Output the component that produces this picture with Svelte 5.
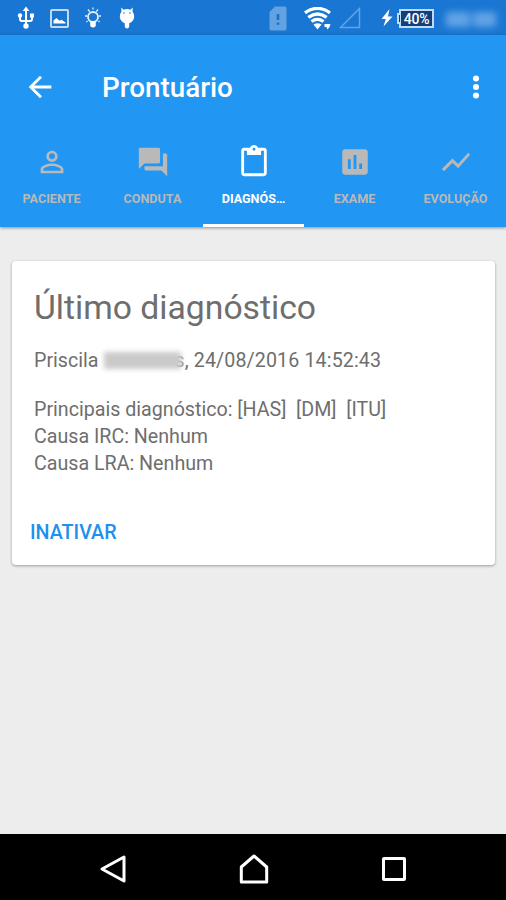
<script>
  const tabs = [
    { label: 'PACIENTE', d: 'M12 5.9c1.16 0 2.1.94 2.1 2.1s-.94 2.1-2.1 2.1S9.900 9.160 9.900 8s.94-2.100 2.100-2.100m0 9c2.970 0 6.100 1.460 6.100 2.100v1.100H5.900V17c0-.64 3.130-2.100 6.100-2.100M12 4C9.790 4 8 5.790 8 8s1.790 4 4 4 4-1.790 4-4-1.790-4-4-4zm0 9c-2.670 0-8 1.340-8 4v3h16v-3c0-2.660-5.330-4-8-4z' },
    { label: 'CONDUTA', d: 'M21 6h-2v9H6v2c0 .55.45 1 1 1h11l4 4V7c0-.55-.45-1-1-1zm-4 6V3c0-.55-.45-1-1-1H3c-.55 0-1 .45-1 1v14l4-4h10c.55 0 1-.45 1-1z' },
    { label: 'DIAGNÓS…', active: true, d: 'M19 2h-4.180C14.400.84 13.300 0 12 0S9.600.84 9.180 2H5c-1.100 0-2 .9-2 2v16c0 1.100.9 2 2 2h14c1.100 0 2-.9 2-2V4c0-1.100-.9-2-2-2zm-7 0c.55 0 1 .45 1 1s-.45 1-1 1-1-.45-1-1 .45-1 1-1zm7 18H5V4h2v3h10V4h2v16z' },
    { label: 'EXAME', d: 'M19 3H5c-1.100 0-2 .9-2 2v14c0 1.100.9 2 2 2h14c1.100 0 2-.9 2-2V5c0-1.100-.9-2-2-2zM9 17H7v-7h2v7zm4 0h-2V7h2v10zm4 0h-2v-4h2v4z' },
    { label: 'EVOLUÇÃO', d: 'M3.500 18.490l6-6.010 4 4L22 6.920l-1.410-1.410-7.090 7.970-4-4L2 16.990z' }
  ];
</script>

<div class="screen">
  <div class="status">
    <svg class="usb" width="18" height="24" viewBox="0 0 18 24" fill="none" stroke="#fff" stroke-width="2">
      <path d="M9 4v15M3 10v3q0 2 2 2h8q2 0 2-2v-3" />
      <path d="M9 .5l3.300 4.500H5.700z" fill="#fff" stroke="none" />
      <circle cx="9" cy="20" r="2.700" fill="#fff" stroke="none" />
      <circle cx="3" cy="9.500" r="2.200" fill="#fff" stroke="none" />
      <path d="M13 7.500h4v4h-4z" fill="#fff" stroke="none" />
    </svg>
    <svg class="photo" width="19" height="19" viewBox="0 0 19 19">
      <rect x="1" y="1" width="17" height="17" rx=".8" fill="none" stroke="#c3daf4" stroke-width="2" />
      <path d="M3.500 14.500v-3l3-2.500 3 2.700 2-1 4 2.800v1z" fill="#fff" />
    </svg>
    <svg class="bulb" width="16" height="22" viewBox="0 0 16 22" fill="none" stroke="#e6f1fc" stroke-width="1.800">
      <circle cx="8" cy="10" r="5" />
      <path d="M5.200 14v5q2.800 3 5.600 0v-5z" fill="#fff" stroke="none" />
      <path d="M3 2.500l1.700 2.200M13 2.500l-1.700 2.200M0 9h2M14 9h2M8 .5v2M2.500 14l-1 1M13.500 14l1 1" stroke-width="1.300" />
    </svg>
    <svg class="android" width="16" height="23" viewBox="0 0 16 23">
      <path d="M2.200.5l2.500 2.300Q8 1.300 11.300 2.800L13.800.5l-.3 4q2 2.500 1.700 5.500-.5 4.500-5 6.200v3.300q-.3 2-2.200 2t-2.200-2v-3.300Q1.300 14.500.8 10 .5 7 2.500 4.500z" fill="#fff" />
      <circle cx="5" cy="6" r=".8" fill="#1976d2" /><circle cx="11" cy="6" r=".8" fill="#1976d2" />
    </svg>
    <svg class="sim" width="18" height="25" viewBox="0 0 18 25">
      <path d="M6 .5h9.500q2 0 2 2v20q0 2-2 2h-13q-2 0-2-2V6z" fill="#62a2e2" />
      <path d="M9 8v6M9 16.500v2.300" stroke="#1c70c4" stroke-width="2.600" />
    </svg>
    <svg class="wifi" width="27" height="23" viewBox="0 0 27 23" fill="none" stroke="#fff">
      <path d="M1 5.800Q13.500-3 26 5.800M4.300 10.300q9.200-6.500 18.400 0M7.500 14.500q6-4.300 12 0" stroke-width="3.300" />
      <path d="M9.500 17.500q4-2.300 8 0l-4 5z" fill="#fff" stroke="none" />
      <path d="M20.500 17h6l-1 3-2 2.500-1-2.500h-2z" fill="#fff" stroke="none" />
    </svg>
    <svg class="signal" width="22" height="22" viewBox="0 0 22 22"><path d="M20.500 1.500v19H1.500z" fill="none" stroke="#62a5e5" stroke-width="1.500" /></svg>
    <svg class="bolt" width="12" height="18" viewBox="0 0 12 18"><path d="M8.500 0L.5 10h4.200L2.500 17.500 11.500 7.500H7z" fill="#fff" /></svg>
    <div class="battery"><span>40%</span></div>
    <div class="clock"><i></i><i></i></div>
  </div>

  <header>
    <div class="toolbar">
      <svg class="back" width="34" height="34" viewBox="0 0 24 24"><path d="M20 11H7.830l5.590-5.590L12 4l-8 8 8 8 1.410-1.410L7.830 13H20v-2z" fill="#fff" /></svg>
      <h1>Prontuário</h1>
      <svg class="more" width="34" height="34" viewBox="0 0 24 24" fill="#fff"><circle cx="12" cy="6" r="2.150" /><circle cx="12" cy="12" r="2.150" /><circle cx="12" cy="18" r="2.150" /></svg>
    </div>
    <nav>
      {#each tabs as tab}
        <div class="tab" class:active={tab.active}>
          <svg width="34" height="34" viewBox="0 0 24 24"><path d={tab.d} fill="currentColor" /></svg>
          <span>{tab.label}</span>
        </div>
      {/each}
    </nav>
  </header>

  <main>
    <section class="card">
      <h2>Último diagnóstico</h2>
      <div class="author"><span class="first">Priscila</span><span class="redacted"></span><span class="date"><span class="cut">s</span>, 24/08/2016 14:52:43</span></div>
      <div class="details">
        <div>Principais diagnóstico: [HAS]&nbsp; [DM]&nbsp; [ITU]</div>
        <div>Causa IRC: Nenhum</div>
        <div>Causa LRA: Nenhum</div>
      </div>
      <div class="action">INATIVAR</div>
    </section>
  </main>

  <footer>
    <svg width="28" height="30" viewBox="0 0 28 30"><path d="M25 3v24L3 15z" /></svg>
    <svg width="32" height="32" viewBox="0 0 32 32"><path d="M3.300 29V14L16 3l12.700 11v15z" /></svg>
    <svg width="28" height="28" viewBox="0 0 28 28"><rect x="3.500" y="3.500" width="21" height="21" rx=".5" /></svg>
  </footer>
</div>

<style>
  .screen {
    width: 506px;
    height: 900px;
    display: flex;
    flex-direction: column;
    overflow: hidden;
    background: #ededed;
    font-family: Roboto, 'Liberation Sans', sans-serif;
  }
  svg { display: block; flex: none; }
  .status {
    flex: none;
    height: 35px;
    display: flex;
    align-items: center;
    background: #1976d2;
    box-sizing: border-box;
    padding: 1px 0 0 17px;
  }
  .photo { margin-left: 15px; }
  .bulb { margin-left: 16px; }
  .android { margin-left: 18px; }
  .sim { margin-left: 134px; }
  .wifi { margin-left: 17px; }
  .signal { margin-left: 8px; }
  .bolt { margin-left: 20px; }
  .battery {
    position: relative;
    flex: none;
    width: 35px;
    height: 19px;
    margin-left: 6px;
    box-sizing: border-box;
    border: 2px solid #c3daf4;
    background: #123f7c;
    color: #fff;
    font-size: 14px;
    line-height: 16px;
    font-weight: 500;
    text-align: center;
    letter-spacing: -0.200px;
  }
  .battery::before {
    content: '';
    position: absolute;
    left: -4px;
    top: 2px;
    width: 3px;
    height: 11px;
    box-sizing: border-box;
    border: 2px solid #c3daf4;
    border-right: 0;
    background: #123f7c;
  }
  .clock {
    flex: none;
    display: flex;
    gap: 3px;
    width: 50px;
    height: 15px;
    margin: 2px 0 0 12px;
    filter: blur(3.500px);
  }
  .clock i { flex: 1; background: #62a3e5; }
  header {
    flex: none;
    position: relative;
    height: 192px;
    background: #2196f3;
    box-shadow: 0 1px 3px rgba(0, 0, 0, 0.400);
  }
  .toolbar {
    height: 104px;
    display: flex;
    align-items: center;
    box-sizing: border-box;
    padding: 0 13px 0 23px;
  }
  h1 {
    flex: 1;
    margin: 2px 0 0 45px;
    color: #fff;
    font-size: 27.800px;
    line-height: 34px;
    font-weight: 500;
  }
  nav { display: flex; height: 88px; box-sizing: border-box; padding-left: 1px; }
  .tab {
    flex: 1 1 0;
    min-width: 0;
    display: flex;
    flex-direction: column;
    align-items: center;
    box-sizing: border-box;
    padding-top: 6px;
    border-bottom: 3px solid transparent;
    color: #b9b9b9;
  }
  .tab.active { color: #fff; border-color: #fff; }
  .tab span {
    margin-top: 11px;
    font-size: 12.600px;
    line-height: 17px;
    font-weight: 700;
    white-space: nowrap;
  }
  main { flex: 1; padding: 34px 11px 0 12px; }
  .card {
    height: 304px;
    box-sizing: border-box;
    padding: 26px 22px 0;
    border-radius: 4px;
    background: #fff;
    box-shadow: 0 1px 3px rgba(0, 0, 0, 0.350);
    color: #6e6e6e;
    font-size: 19.650px;
    line-height: 27px;
    white-space: nowrap;
  }
  h2 {
    margin: 0;
    font-size: 33.700px;
    line-height: 42px;
    font-weight: 400;
  }
  .author { display: flex; align-items: center; margin-top: 18px; }
  .redacted {
    position: relative;
    width: 77px;
    height: 17px;
    margin-left: 6px;
    margin-right: -7px;
    background: #cacaca;
    filter: blur(2.500px);
  }
  .date { letter-spacing: 0.120px; }
  .cut { color: #999; }
  .details { margin-top: 22px; }
  .action {
    margin: 42px 0 0 -4px;
    color: #2090ed;
    font-size: 19.700px;
    font-weight: 500;
  }
  footer {
    flex: none;
    height: 66px;
    display: flex;
    align-items: center;
    box-sizing: border-box;
    padding: 4px 98px 0 99px;
    justify-content: space-between;
    background: #000;
  }
  footer svg { fill: none; stroke: #fff; stroke-width: 3; stroke-linejoin: round; }
</style>
